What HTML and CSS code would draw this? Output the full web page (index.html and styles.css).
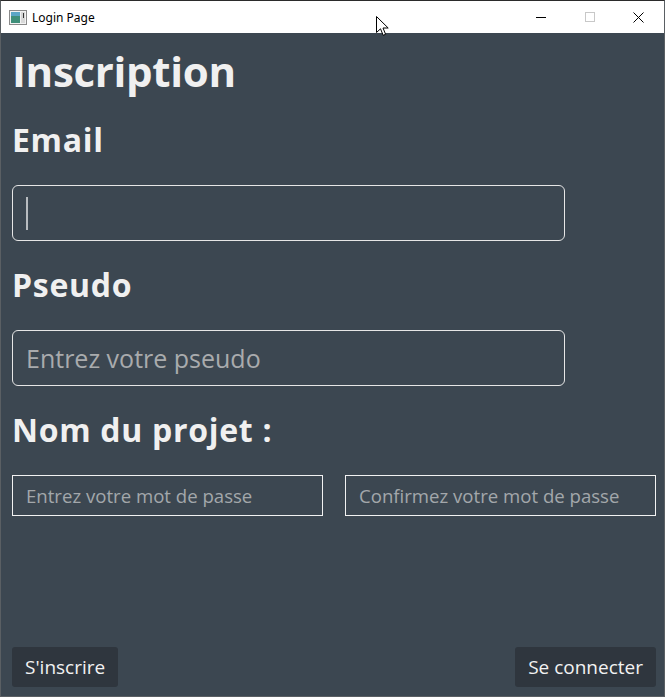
FILE: index.html
```html
<!DOCTYPE html>
<html lang="fr">
<head>
<meta charset="utf-8">
<title>Login Page</title>
<link rel="stylesheet" href="styles.css">
</head>
<body>
<div class="window">
  <div class="titlebar">
    <div class="app">
      <svg class="app-icon" width="18" height="15" viewBox="0 0 18 15">
        <rect x="0.5" y="0.5" width="17" height="14" fill="#f2f2f2" stroke="#8a8a8a"/>
        <rect x="2" y="2" width="9" height="11" fill="#3f8f7a"/>
        <rect x="2" y="2" width="9" height="4" fill="#5ba6c6"/>
        <rect x="12" y="2" width="4" height="11" fill="#d8d8d8"/>
        <rect x="14" y="3" width="1" height="5" fill="#333"/>
      </svg>
      <span class="app-title">Login Page</span>
    </div>
    <div class="controls">
      <span class="ctl"><svg width="10" height="10" viewBox="0 0 10 10"><path d="M0 5.5H10" stroke="#000" stroke-width="1"/></svg></span>
      <span class="ctl"><svg width="10" height="10" viewBox="0 0 10 10"><rect x="0.5" y="0.5" width="9" height="9" fill="none" stroke="#c8c8c8"/></svg></span>
      <span class="ctl"><svg width="11" height="11" viewBox="0 0 11 11"><path d="M0.5 0.5L10.5 10.5M10.5 0.5L0.5 10.5" stroke="#000" stroke-width="1"/></svg></span>
    </div>
  </div>
  <main class="content">
    <h1 class="title">Inscription</h1>
    <h2 class="label">Email</h2>
    <div class="field"><span class="caret"></span></div>
    <h2 class="label">Pseudo</h2>
    <div class="field"><span class="placeholder">Entrez votre pseudo</span></div>
    <h2 class="label">Nom du projet :</h2>
    <div class="pw-row">
      <div class="pw"><span>Entrez votre mot de passe</span></div>
      <div class="pw"><span>Confirmez votre mot de passe</span></div>
    </div>
    <div class="spacer"></div>
    <div class="actions">
      <button class="btn">S'inscrire</button>
      <button class="btn">Se connecter</button>
    </div>
  </main>
  <svg class="cursor" width="13" height="21" viewBox="0 0 13 21">
    <path d="M0.5 0.5V16.5L4.5 12.8L7.2 19.3L9.6 18.3L7 12H12.2Z" fill="#fff" stroke="#000" stroke-width="1" stroke-linejoin="miter"/>
  </svg>
</div>
</body>
</html>
```
FILE: styles.css
```css
* { box-sizing: border-box; }
html, body { margin: 0; padding: 0; }
body {
  width: 665px;
  height: 697px;
  overflow: hidden;
  background: #3b4650;
  font-family: "Open Sans", "Noto Sans", sans-serif;
}
.window {
  position: relative;
  width: 665px;
  height: 697px;
  display: flex;
  flex-direction: column;
  border: 1px solid #5a5f63;
  border-top-color: #2b2b2b;
  background: #3c4751;
}
.titlebar {
  height: 32px;
  flex: none;
  background: #fff;
  display: flex;
  align-items: center;
  justify-content: space-between;
}
.app { display: flex; align-items: center; padding-left: 8px; }
.app-icon { display: block; }
.app-title {
  margin-left: 5px;
  font-family: "Noto Sans", sans-serif;
  font-size: 12px;
  color: #000;
}
.controls { display: flex; height: 100%; padding-right: 1px; }
.ctl {
  width: 49px;
  height: 100%;
  display: flex;
  align-items: center;
  justify-content: center;
}
.content {
  flex: 1;
  display: flex;
  flex-direction: column;
  padding: 0 8px 8px 11px;
  color: #f0f0f0;
}
.title {
  margin: 0;
  height: 63px;
  font-size: 42px;
  font-weight: 700;
  line-height: 75px;
  letter-spacing: -0.3px;
}
.label {
  margin: 0;
  height: 89px;
  padding-top: 22px;
  font-size: 32px;
  font-weight: 700;
  line-height: 44px;
  letter-spacing: 0.7px;
}
.field {
  width: 553px;
  height: 56px;
  border: 1.5px solid #e6e6e6;
  border-radius: 6px;
  display: flex;
  align-items: center;
  padding-left: 13px;
}
.caret {
  width: 2px;
  height: 33px;
  background: #b8bcc0;
}
.placeholder {
  font-size: 25px;
  color: #a9abad;
}
.pw-row {
  display: flex;
  gap: 22px;
}
.pw {
  width: 311px;
  height: 41px;
  border: 1px solid #f2f2f2;
  display: flex;
  align-items: center;
  padding-left: 13px;
  font-size: 18.6px;
  color: #a3a7ab;
}
.spacer { flex: 1; }
.actions {
  display: flex;
  justify-content: space-between;
  padding-bottom: 1px;
}
.btn {
  height: 40px;
  padding: 0 13px;
  border: none;
  border-radius: 3px;
  background: #2f363e;
  color: #f2f2f2;
  font-family: "Open Sans", "Noto Sans", sans-serif;
  font-size: 19px;
}
.cursor {
  position: absolute;
  left: 375px;
  top: 15px;
}
```
